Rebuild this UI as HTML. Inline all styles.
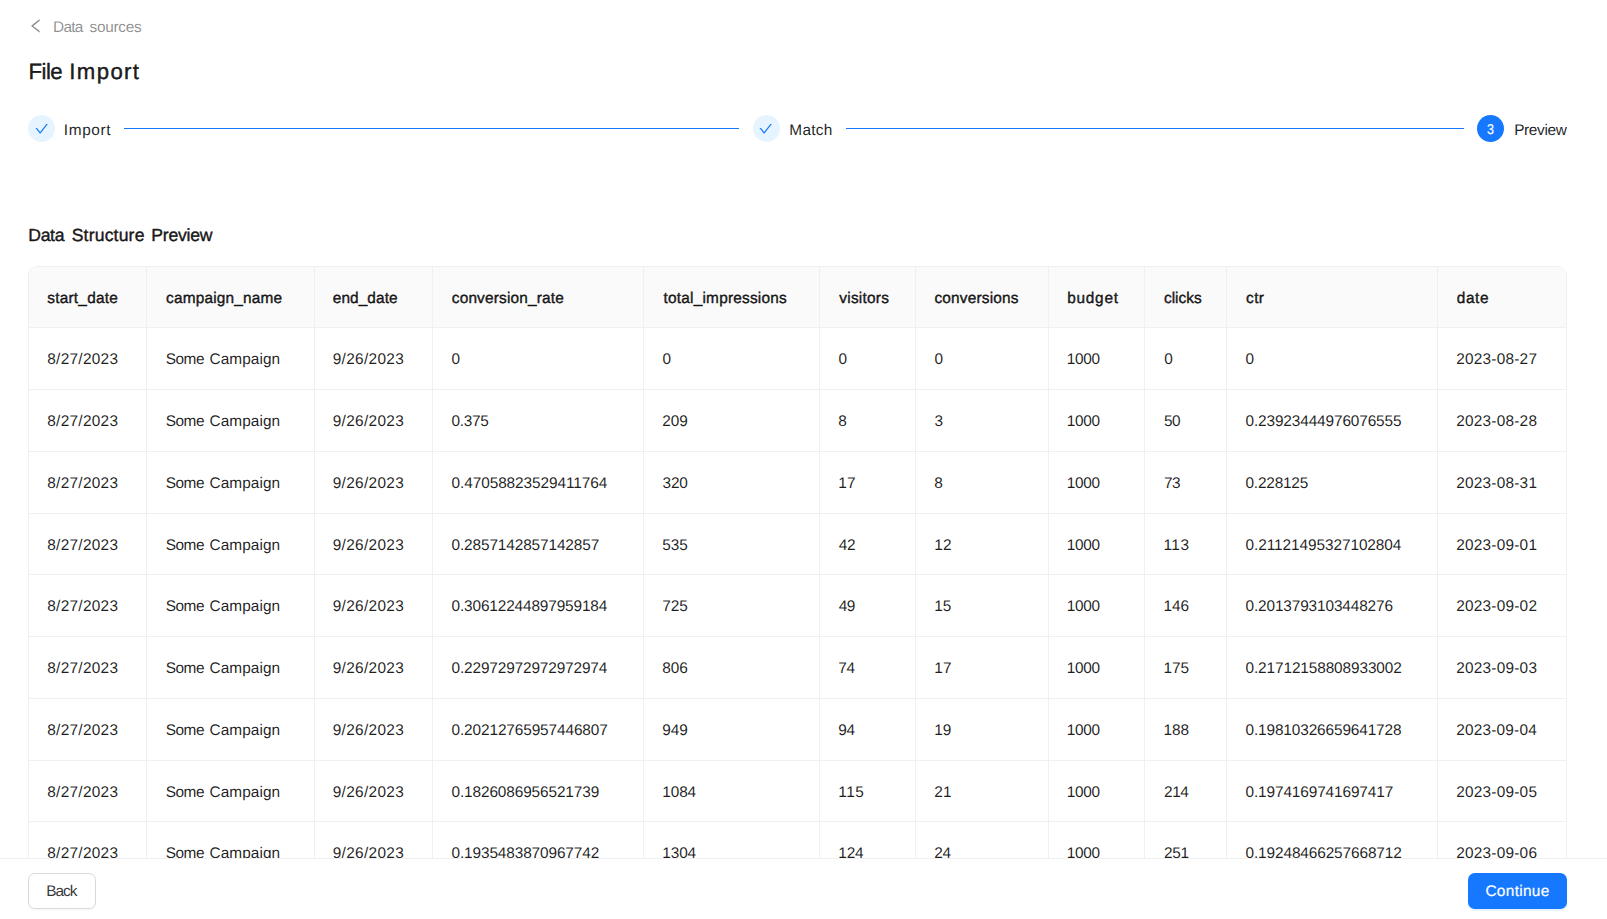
<!DOCTYPE html>
<html lang="en"><head><meta charset="utf-8"><title>File Import</title>
<style>
html,body{margin:0;padding:0;background:#fff;text-rendering:geometricPrecision;}
body{width:1607px;height:919px;overflow:hidden;position:relative;font-family:'Liberation Sans',sans-serif;font-size:15.4px;color:rgba(0,0,0,0.88);}
.t{position:absolute;white-space:pre;line-height:20px;height:20px;}
.abs{position:absolute;}
.ico{position:absolute;width:27px;height:27px;border-radius:50%;top:115px;}
.done{background:#e6f4ff;}
.cur{background:#1677ff;}
.line{position:absolute;top:128px;height:1px;background:#1677ff;}
.tbl{position:absolute;left:28px;top:266px;width:1539px;height:700px;box-sizing:border-box;border-left:1px solid #f0f0f0;border-top:1px solid #f0f0f0;border-radius:9px 9px 0 0;overflow:hidden;}
.tr{position:absolute;left:0;width:1538px;}
.th{background:#fafafa;}
.td{position:absolute;top:0;height:100%;box-sizing:border-box;border-right:1px solid #f0f0f0;border-bottom:1px solid #f0f0f0;}
.foot{position:absolute;left:0;top:858px;width:1607px;height:61px;background:#fff;border-top:1px solid #f0f0f0;box-sizing:border-box;}
.btn{position:absolute;top:873px;height:36px;box-sizing:border-box;border-radius:6.75px;margin:0;padding:0;border:0;font:inherit;color:inherit;text-align:left;overflow:visible;}
.btn-d{left:28px;width:68px;background:#fff;border:1px solid #d9d9d9;box-shadow:0 2px 0 rgba(0,0,0,0.02);}
.btn-p{left:1468px;width:99px;background:#1677ff;box-shadow:0 2px 0 rgba(5,145,255,0.1);}
</style></head>
<body>
<div class="bc">
<svg class="abs" style="left:28px;top:18.1px" width="15.75" height="15.75" viewBox="64 64 896 896"><path fill="rgba(0,0,0,0.45)" d="M724 218.3V141c0-6.700-7.700-10.400-12.900-6.300L260.300 486.800a31.860 31.860 0 000 50.300l450.800 352.100c5.300 4.100 12.900.4 12.900-6.300v-77.300c0-4.900-2.300-9.600-6.100-12.600l-360-281 360-281.100c3.800-3 6.100-7.700 6.100-12.600z"/></svg>
<span class="t" style="left:53.05px;top:18.00px;letter-spacing:-0.717px;color:rgba(0,0,0,0.45);">Data</span> <span class="t" style="left:89.50px;top:18.00px;letter-spacing:-0.292px;color:rgba(0,0,0,0.45);">sources</span>
</div>
<h1 style="margin:0;font-weight:normal"><span class="t" style="left:28.50px;top:61.75px;font-size:22.2px;letter-spacing:-0.533px;-webkit-text-stroke:0.45px currentColor;">File</span> <span class="t" style="left:69.35px;top:61.75px;font-size:22.2px;letter-spacing:1.35px;-webkit-text-stroke:0.45px currentColor;">Import</span></h1>
<div class="steps">
<div class="ico done" style="left:28px"></div><svg class="abs" style="left:34.75px;top:121.75px" width="13.5" height="13.5" viewBox="64 64 896 896"><path fill="#1677ff" d="M912 190h-69.900c-9.800 0-19.100 4.500-25.100 12.200L404.700 724.500 207 474a32 32 0 00-25.100-12.200H112c-6.700 0-10.400 7.700-6.300 12.900l273.900 347c12.800 16.200 37.400 16.200 50.300 0l488.400-618.900c4.100-5.100.4-12.800-6.300-12.800z"/></svg><span class="t" style="left:63.80px;top:121.00px;letter-spacing:0.62px;">Import</span>
<div class="line" style="left:124px;width:615px"></div>
<div class="ico done" style="left:753px"></div><svg class="abs" style="left:758.85px;top:121.75px" width="13.5" height="13.5" viewBox="64 64 896 896"><path fill="#1677ff" d="M912 190h-69.900c-9.800 0-19.100 4.500-25.100 12.200L404.700 724.500 207 474a32 32 0 00-25.100-12.200H112c-6.700 0-10.400 7.700-6.300 12.900l273.900 347c12.800 16.200 37.400 16.200 50.300 0l488.400-618.900c4.100-5.100.4-12.800-6.300-12.800z"/></svg><span class="t" style="left:789.35px;top:121.00px;letter-spacing:0.287px;">Match</span>
<div class="line" style="left:846px;width:618px"></div>
<div class="ico cur" style="left:1477px"></div><span class="t" style="left:1487.30px;top:120.00px;font-size:14.2px;-webkit-text-stroke:0.2px currentColor;color:#fff;transform:scaleX(0.88);transform-origin:0 50%;">3</span><span class="t" style="left:1514.15px;top:121.00px;letter-spacing:-0.35px;">Preview</span>
</div>
<h2 style="margin:0;font-weight:normal"><span class="t" style="left:28.25px;top:224.75px;font-size:17.6px;letter-spacing:-0.317px;-webkit-text-stroke:0.45px currentColor;">Data</span> <span class="t" style="left:71.70px;top:224.75px;font-size:17.6px;letter-spacing:0.169px;-webkit-text-stroke:0.45px currentColor;">Structure</span> <span class="t" style="left:151.35px;top:224.75px;font-size:17.6px;letter-spacing:-0.242px;-webkit-text-stroke:0.45px currentColor;">Preview</span></h2>
<div class="tbl">
<div class="tr th" style="top:0px;height:61px"><div class="td" style="left:0px;width:118px"><span class="t" style="left:18.35px;top:21.75px;letter-spacing:0.217px;-webkit-text-stroke:0.45px currentColor;">start_date</span></div><div class="td" style="left:118px;width:168px"><span class="t" style="left:19.10px;top:21.75px;letter-spacing:0.171px;-webkit-text-stroke:0.45px currentColor;">campaign_name</span></div><div class="td" style="left:286px;width:118px"><span class="t" style="left:17.80px;top:21.75px;letter-spacing:0.079px;-webkit-text-stroke:0.45px currentColor;">end_date</span></div><div class="td" style="left:404px;width:211px"><span class="t" style="left:18.80px;top:21.75px;letter-spacing:0.171px;-webkit-text-stroke:0.45px currentColor;">conversion_rate</span></div><div class="td" style="left:615px;width:176px"><span class="t" style="left:19.60px;top:21.75px;letter-spacing:0.206px;-webkit-text-stroke:0.45px currentColor;">total_impressions</span></div><div class="td" style="left:791px;width:96px"><span class="t" style="left:19.35px;top:21.75px;letter-spacing:0.236px;-webkit-text-stroke:0.45px currentColor;">visitors</span></div><div class="td" style="left:887px;width:133px"><span class="t" style="left:18.40px;top:21.75px;letter-spacing:0.205px;-webkit-text-stroke:0.45px currentColor;">conversions</span></div><div class="td" style="left:1020px;width:96px"><span class="t" style="left:18.15px;top:21.75px;letter-spacing:0.76px;-webkit-text-stroke:0.45px currentColor;">budget</span></div><div class="td" style="left:1116px;width:82px"><span class="t" style="left:18.90px;top:21.75px;letter-spacing:0.05px;-webkit-text-stroke:0.45px currentColor;">clicks</span></div><div class="td" style="left:1198px;width:211px"><span class="t" style="left:19.10px;top:21.75px;letter-spacing:0.4px;-webkit-text-stroke:0.45px currentColor;">ctr</span></div><div class="td" style="left:1409px;width:129px"><span class="t" style="left:18.80px;top:21.75px;letter-spacing:0.567px;-webkit-text-stroke:0.45px currentColor;">date</span></div></div>
<div class="tr " style="top:61px;height:62px"><div class="td" style="left:0px;width:118px"><span class="t" style="left:18.25px;top:22.00px;letter-spacing:0.287px;">8/27/2023</span></div><div class="td" style="left:118px;width:168px"><span class="t" style="left:18.75px;top:22.00px;letter-spacing:-0.483px;">Some</span> <span class="t" style="left:62.55px;top:22.00px;letter-spacing:0.05px;">Campaign</span></div><div class="td" style="left:286px;width:118px"><span class="t" style="left:17.75px;top:22.00px;letter-spacing:0.313px;">9/26/2023</span></div><div class="td" style="left:404px;width:211px"><span class="t" style="left:18.50px;top:22.00px;">0</span></div><div class="td" style="left:615px;width:176px"><span class="t" style="left:18.50px;top:22.00px;">0</span></div><div class="td" style="left:791px;width:96px"><span class="t" style="left:18.50px;top:22.00px;">0</span></div><div class="td" style="left:887px;width:133px"><span class="t" style="left:18.50px;top:22.00px;">0</span></div><div class="td" style="left:1020px;width:96px"><span class="t" style="left:17.85px;top:22.00px;letter-spacing:-0.3px;">1000</span></div><div class="td" style="left:1116px;width:82px"><span class="t" style="left:19.20px;top:22.00px;">0</span></div><div class="td" style="left:1198px;width:211px"><span class="t" style="left:18.50px;top:22.00px;">0</span></div><div class="td" style="left:1409px;width:129px"><span class="t" style="left:18.25px;top:22.00px;letter-spacing:0.219px;">2023-08-27</span></div></div>
<div class="tr " style="top:123px;height:62px"><div class="td" style="left:0px;width:118px"><span class="t" style="left:18.25px;top:22.00px;letter-spacing:0.287px;">8/27/2023</span></div><div class="td" style="left:118px;width:168px"><span class="t" style="left:18.75px;top:22.00px;letter-spacing:-0.483px;">Some</span> <span class="t" style="left:62.55px;top:22.00px;letter-spacing:0.05px;">Campaign</span></div><div class="td" style="left:286px;width:118px"><span class="t" style="left:17.75px;top:22.00px;letter-spacing:0.313px;">9/26/2023</span></div><div class="td" style="left:404px;width:211px"><span class="t" style="left:18.50px;top:22.00px;letter-spacing:-0.292px;">0.375</span></div><div class="td" style="left:615px;width:176px"><span class="t" style="left:18.25px;top:22.00px;letter-spacing:-0.04px;">209</span></div><div class="td" style="left:791px;width:96px"><span class="t" style="left:18.25px;top:22.00px;">8</span></div><div class="td" style="left:887px;width:133px"><span class="t" style="left:18.50px;top:22.00px;">3</span></div><div class="td" style="left:1020px;width:96px"><span class="t" style="left:17.85px;top:22.00px;letter-spacing:-0.3px;">1000</span></div><div class="td" style="left:1116px;width:82px"><span class="t" style="left:18.95px;top:22.00px;letter-spacing:-0.47px;">50</span></div><div class="td" style="left:1198px;width:211px"><span class="t" style="left:18.50px;top:22.00px;letter-spacing:-0.128px;">0.23923444976076555</span></div><div class="td" style="left:1409px;width:129px"><span class="t" style="left:18.25px;top:22.00px;letter-spacing:0.219px;">2023-08-28</span></div></div>
<div class="tr " style="top:185px;height:62px"><div class="td" style="left:0px;width:118px"><span class="t" style="left:18.25px;top:22.00px;letter-spacing:0.287px;">8/27/2023</span></div><div class="td" style="left:118px;width:168px"><span class="t" style="left:18.75px;top:22.00px;letter-spacing:-0.483px;">Some</span> <span class="t" style="left:62.55px;top:22.00px;letter-spacing:0.05px;">Campaign</span></div><div class="td" style="left:286px;width:118px"><span class="t" style="left:17.75px;top:22.00px;letter-spacing:0.313px;">9/26/2023</span></div><div class="td" style="left:404px;width:211px"><span class="t" style="left:18.50px;top:22.00px;letter-spacing:-0.073px;">0.47058823529411764</span></div><div class="td" style="left:615px;width:176px"><span class="t" style="left:18.50px;top:22.00px;letter-spacing:-0.165px;">320</span></div><div class="td" style="left:791px;width:96px"><span class="t" style="left:18.25px;top:22.00px;letter-spacing:0.18px;">17</span></div><div class="td" style="left:887px;width:133px"><span class="t" style="left:18.25px;top:22.00px;">8</span></div><div class="td" style="left:1020px;width:96px"><span class="t" style="left:17.85px;top:22.00px;letter-spacing:-0.3px;">1000</span></div><div class="td" style="left:1116px;width:82px"><span class="t" style="left:18.95px;top:22.00px;letter-spacing:-0.47px;">73</span></div><div class="td" style="left:1198px;width:211px"><span class="t" style="left:18.50px;top:22.00px;letter-spacing:-0.207px;">0.228125</span></div><div class="td" style="left:1409px;width:129px"><span class="t" style="left:18.25px;top:22.00px;letter-spacing:0.219px;">2023-08-31</span></div></div>
<div class="tr " style="top:247px;height:61px"><div class="td" style="left:0px;width:118px"><span class="t" style="left:18.25px;top:22.00px;letter-spacing:0.287px;">8/27/2023</span></div><div class="td" style="left:118px;width:168px"><span class="t" style="left:18.75px;top:22.00px;letter-spacing:-0.483px;">Some</span> <span class="t" style="left:62.55px;top:22.00px;letter-spacing:0.05px;">Campaign</span></div><div class="td" style="left:286px;width:118px"><span class="t" style="left:17.75px;top:22.00px;letter-spacing:0.313px;">9/26/2023</span></div><div class="td" style="left:404px;width:211px"><span class="t" style="left:18.50px;top:22.00px;letter-spacing:-0.121px;">0.2857142857142857</span></div><div class="td" style="left:615px;width:176px"><span class="t" style="left:18.25px;top:22.00px;letter-spacing:-0.04px;">535</span></div><div class="td" style="left:791px;width:96px"><span class="t" style="left:18.75px;top:22.00px;letter-spacing:-0.32px;">42</span></div><div class="td" style="left:887px;width:133px"><span class="t" style="left:18.25px;top:22.00px;letter-spacing:0.18px;">12</span></div><div class="td" style="left:1020px;width:96px"><span class="t" style="left:17.85px;top:22.00px;letter-spacing:-0.3px;">1000</span></div><div class="td" style="left:1116px;width:82px"><span class="t" style="left:18.45px;top:22.00px;letter-spacing:0.51px;">113</span></div><div class="td" style="left:1198px;width:211px"><span class="t" style="left:18.50px;top:22.00px;letter-spacing:-0.073px;">0.21121495327102804</span></div><div class="td" style="left:1409px;width:129px"><span class="t" style="left:18.25px;top:22.00px;letter-spacing:0.219px;">2023-09-01</span></div></div>
<div class="tr " style="top:308px;height:62px"><div class="td" style="left:0px;width:118px"><span class="t" style="left:18.25px;top:22.00px;letter-spacing:0.287px;">8/27/2023</span></div><div class="td" style="left:118px;width:168px"><span class="t" style="left:18.75px;top:22.00px;letter-spacing:-0.483px;">Some</span> <span class="t" style="left:62.55px;top:22.00px;letter-spacing:0.05px;">Campaign</span></div><div class="td" style="left:286px;width:118px"><span class="t" style="left:17.75px;top:22.00px;letter-spacing:0.313px;">9/26/2023</span></div><div class="td" style="left:404px;width:211px"><span class="t" style="left:18.50px;top:22.00px;letter-spacing:-0.142px;">0.30612244897959184</span></div><div class="td" style="left:615px;width:176px"><span class="t" style="left:18.25px;top:22.00px;letter-spacing:-0.04px;">725</span></div><div class="td" style="left:791px;width:96px"><span class="t" style="left:18.75px;top:22.00px;letter-spacing:-0.57px;">49</span></div><div class="td" style="left:887px;width:133px"><span class="t" style="left:18.25px;top:22.00px;letter-spacing:-0.07px;">15</span></div><div class="td" style="left:1020px;width:96px"><span class="t" style="left:17.85px;top:22.00px;letter-spacing:-0.3px;">1000</span></div><div class="td" style="left:1116px;width:82px"><span class="t" style="left:18.45px;top:22.00px;letter-spacing:0.01px;">146</span></div><div class="td" style="left:1198px;width:211px"><span class="t" style="left:18.50px;top:22.00px;letter-spacing:-0.135px;">0.2013793103448276</span></div><div class="td" style="left:1409px;width:129px"><span class="t" style="left:18.25px;top:22.00px;letter-spacing:0.219px;">2023-09-02</span></div></div>
<div class="tr " style="top:370px;height:62px"><div class="td" style="left:0px;width:118px"><span class="t" style="left:18.25px;top:22.00px;letter-spacing:0.287px;">8/27/2023</span></div><div class="td" style="left:118px;width:168px"><span class="t" style="left:18.75px;top:22.00px;letter-spacing:-0.483px;">Some</span> <span class="t" style="left:62.55px;top:22.00px;letter-spacing:0.05px;">Campaign</span></div><div class="td" style="left:286px;width:118px"><span class="t" style="left:17.75px;top:22.00px;letter-spacing:0.313px;">9/26/2023</span></div><div class="td" style="left:404px;width:211px"><span class="t" style="left:18.50px;top:22.00px;letter-spacing:-0.142px;">0.22972972972972974</span></div><div class="td" style="left:615px;width:176px"><span class="t" style="left:18.25px;top:22.00px;letter-spacing:-0.04px;">806</span></div><div class="td" style="left:791px;width:96px"><span class="t" style="left:18.25px;top:22.00px;letter-spacing:-0.32px;">74</span></div><div class="td" style="left:887px;width:133px"><span class="t" style="left:18.25px;top:22.00px;letter-spacing:0.18px;">17</span></div><div class="td" style="left:1020px;width:96px"><span class="t" style="left:17.85px;top:22.00px;letter-spacing:-0.3px;">1000</span></div><div class="td" style="left:1116px;width:82px"><span class="t" style="left:18.45px;top:22.00px;letter-spacing:0.01px;">175</span></div><div class="td" style="left:1198px;width:211px"><span class="t" style="left:18.50px;top:22.00px;letter-spacing:-0.114px;">0.21712158808933002</span></div><div class="td" style="left:1409px;width:129px"><span class="t" style="left:18.25px;top:22.00px;letter-spacing:0.219px;">2023-09-03</span></div></div>
<div class="tr " style="top:432px;height:62px"><div class="td" style="left:0px;width:118px"><span class="t" style="left:18.25px;top:22.00px;letter-spacing:0.287px;">8/27/2023</span></div><div class="td" style="left:118px;width:168px"><span class="t" style="left:18.75px;top:22.00px;letter-spacing:-0.483px;">Some</span> <span class="t" style="left:62.55px;top:22.00px;letter-spacing:0.05px;">Campaign</span></div><div class="td" style="left:286px;width:118px"><span class="t" style="left:17.75px;top:22.00px;letter-spacing:0.313px;">9/26/2023</span></div><div class="td" style="left:404px;width:211px"><span class="t" style="left:18.50px;top:22.00px;letter-spacing:-0.114px;">0.20212765957446807</span></div><div class="td" style="left:615px;width:176px"><span class="t" style="left:18.25px;top:22.00px;letter-spacing:-0.04px;">949</span></div><div class="td" style="left:791px;width:96px"><span class="t" style="left:18.25px;top:22.00px;letter-spacing:-0.32px;">94</span></div><div class="td" style="left:887px;width:133px"><span class="t" style="left:18.25px;top:22.00px;letter-spacing:-0.07px;">19</span></div><div class="td" style="left:1020px;width:96px"><span class="t" style="left:17.85px;top:22.00px;letter-spacing:-0.3px;">1000</span></div><div class="td" style="left:1116px;width:82px"><span class="t" style="left:18.45px;top:22.00px;letter-spacing:0.01px;">188</span></div><div class="td" style="left:1198px;width:211px"><span class="t" style="left:18.50px;top:22.00px;letter-spacing:-0.128px;">0.19810326659641728</span></div><div class="td" style="left:1409px;width:129px"><span class="t" style="left:18.25px;top:22.00px;letter-spacing:0.191px;">2023-09-04</span></div></div>
<div class="tr " style="top:494px;height:61px"><div class="td" style="left:0px;width:118px"><span class="t" style="left:18.25px;top:22.00px;letter-spacing:0.287px;">8/27/2023</span></div><div class="td" style="left:118px;width:168px"><span class="t" style="left:18.75px;top:22.00px;letter-spacing:-0.483px;">Some</span> <span class="t" style="left:62.55px;top:22.00px;letter-spacing:0.05px;">Campaign</span></div><div class="td" style="left:286px;width:118px"><span class="t" style="left:17.75px;top:22.00px;letter-spacing:0.313px;">9/26/2023</span></div><div class="td" style="left:404px;width:211px"><span class="t" style="left:18.50px;top:22.00px;letter-spacing:-0.121px;">0.1826086956521739</span></div><div class="td" style="left:615px;width:176px"><span class="t" style="left:18.25px;top:22.00px;letter-spacing:-0.113px;">1084</span></div><div class="td" style="left:791px;width:96px"><span class="t" style="left:18.25px;top:22.00px;letter-spacing:0.46px;">115</span></div><div class="td" style="left:887px;width:133px"><span class="t" style="left:18.25px;top:22.00px;letter-spacing:0.18px;">21</span></div><div class="td" style="left:1020px;width:96px"><span class="t" style="left:17.85px;top:22.00px;letter-spacing:-0.3px;">1000</span></div><div class="td" style="left:1116px;width:82px"><span class="t" style="left:18.95px;top:22.00px;letter-spacing:-0.365px;">214</span></div><div class="td" style="left:1198px;width:211px"><span class="t" style="left:18.50px;top:22.00px;letter-spacing:-0.121px;">0.1974169741697417</span></div><div class="td" style="left:1409px;width:129px"><span class="t" style="left:18.25px;top:22.00px;letter-spacing:0.219px;">2023-09-05</span></div></div>
<div class="tr " style="top:555px;height:62px"><div class="td" style="left:0px;width:118px"><span class="t" style="left:18.25px;top:22.00px;letter-spacing:0.287px;">8/27/2023</span></div><div class="td" style="left:118px;width:168px"><span class="t" style="left:18.75px;top:22.00px;letter-spacing:-0.483px;">Some</span> <span class="t" style="left:62.55px;top:22.00px;letter-spacing:0.05px;">Campaign</span></div><div class="td" style="left:286px;width:118px"><span class="t" style="left:17.75px;top:22.00px;letter-spacing:0.313px;">9/26/2023</span></div><div class="td" style="left:404px;width:211px"><span class="t" style="left:18.50px;top:22.00px;letter-spacing:-0.121px;">0.1935483870967742</span></div><div class="td" style="left:615px;width:176px"><span class="t" style="left:18.25px;top:22.00px;letter-spacing:-0.113px;">1304</span></div><div class="td" style="left:791px;width:96px"><span class="t" style="left:18.25px;top:22.00px;letter-spacing:-0.165px;">124</span></div><div class="td" style="left:887px;width:133px"><span class="t" style="left:18.25px;top:22.00px;letter-spacing:-0.32px;">24</span></div><div class="td" style="left:1020px;width:96px"><span class="t" style="left:17.85px;top:22.00px;letter-spacing:-0.3px;">1000</span></div><div class="td" style="left:1116px;width:82px"><span class="t" style="left:18.95px;top:22.00px;letter-spacing:-0.24px;">251</span></div><div class="td" style="left:1198px;width:211px"><span class="t" style="left:18.50px;top:22.00px;letter-spacing:-0.114px;">0.19248466257668712</span></div><div class="td" style="left:1409px;width:129px"><span class="t" style="left:18.25px;top:22.00px;letter-spacing:0.219px;">2023-09-06</span></div></div>
</div>
<div class="foot"></div>
<div role="button" class="btn btn-d"><span class="t" style="left:17.15px;top:8.00px;letter-spacing:-0.967px;color:rgba(0,0,0,0.8);">Back</span></div>
<div role="button" class="btn btn-p"><span class="t" style="left:17.45px;top:9.00px;letter-spacing:0.321px;-webkit-text-stroke:0.2px currentColor;color:#fff;">Continue</span></div>
</body></html>
